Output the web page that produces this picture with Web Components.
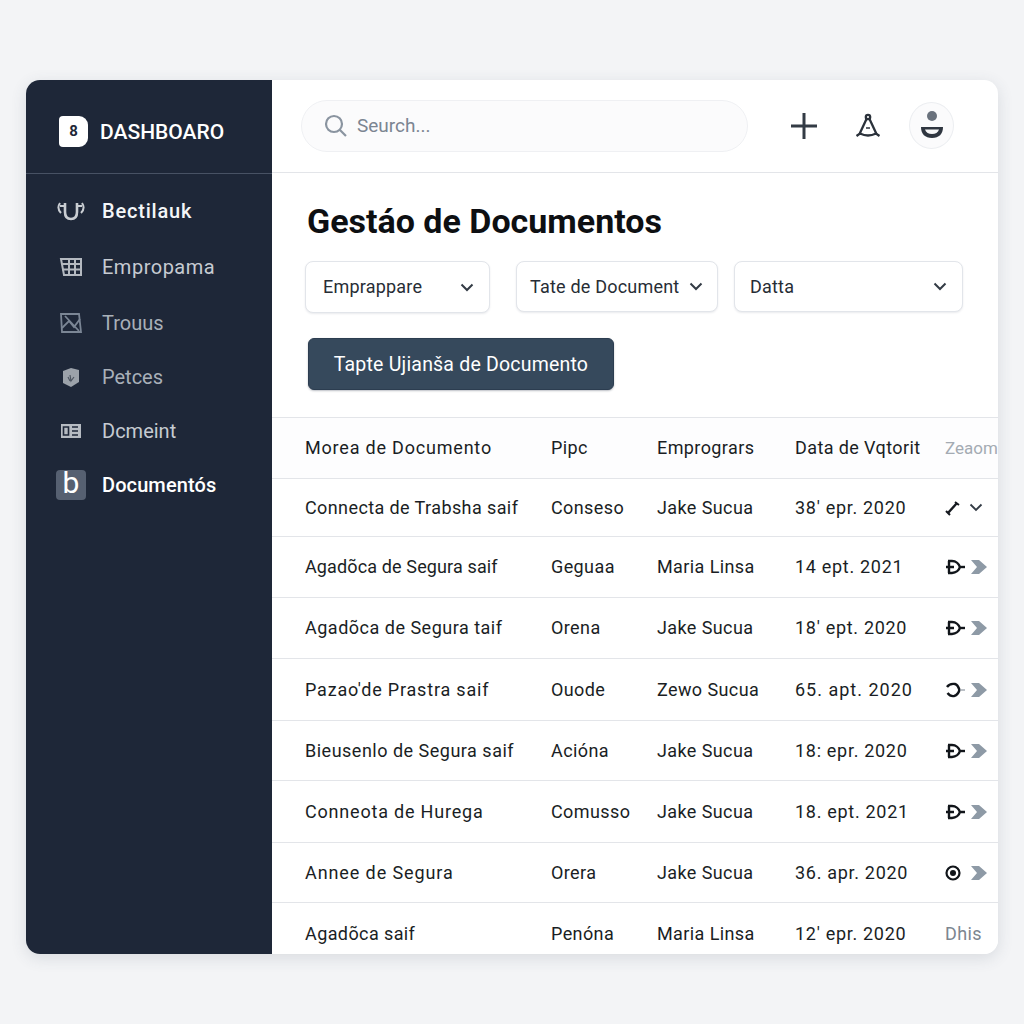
<!DOCTYPE html>
<html lang="pt">
<head>
<meta charset="utf-8">
<title>Gestão de Documentos</title>
<style>
html,body{margin:0;padding:0;background:#f3f4f6}
body{font-family:Roboto,"Liberation Sans",sans-serif;padding:80px 26px 70px;box-sizing:border-box;height:1024px;overflow:hidden}
</style>
</head>
<body>
<app-shell>
  <side-bar slot="side">
    <nav-item h="56" first tone="#f4f6f8" label="Bectilauk" weight="500" ls=".8"><svg viewBox="0 0 28 20" width="28" height="20" fill="none" stroke="#c9cdd2" stroke-width="2.600"><path d="M8 2v9c0 4 2 7 6 7s6-3 6-7V2"/><path d="M3 2c-2 3-2 7 1 10M25 2c2 3 2 7-1 10M3 5h5M20 5h5" stroke-width="2"/></svg></nav-item>
    <nav-item h="56" tone="#c6cbd2" label="Empropama" ls=".5"><svg viewBox="0 0 24 20" width="24" height="20" fill="none" stroke="#b4b9c0" stroke-width="2"><path d="M2 2h20v16H5z"/><path d="M2 7h20M3 12.500h19M10 2v16M16 2v16"/></svg></nav-item>
    <nav-item h="55" tone="#a9b0b9" label="Trouus"><svg viewBox="0 0 24 22" width="24" height="22" fill="none" stroke="#7b8695" stroke-width="1.800"><path d="M2 2h18l2 18H3z"/><path d="M3 16 10 9l5 6 6-8M6 4l14 15"/></svg></nav-item>
    <nav-item h="54" tone="#a9b0b9" label="Petces"><svg viewBox="0 0 20 22" width="20" height="22"><path d="M2 5l8-3 8 2v12l-8 5-8-4z" fill="#9ca2aa"/><path d="M9 9l1 6 3-4M7 11l2 4" fill="none" stroke="#4d5561" stroke-width="1.200"/></svg></nav-item>
    <nav-item h="54" tone="#c6cbd2" label="Dcmeint"><svg viewBox="0 0 22 16" width="22" height="16"><rect x="1" y="1" width="20" height="14" fill="#b6bbc2"/><path d="M3.500 4h5v8h-5zM12 4h6M12 8h6M12 12h6" stroke="#1e2738" stroke-width="1.600" fill="none"/></svg></nav-item>
    <nav-item h="53" active tone="#fff" label="Documentós" weight="500" ls=".1"><span style="font:400 30px/30px Roboto,sans-serif;color:#fff;margin-top:-3px">b</span></nav-item>
  </side-bar>
  <top-bar slot="main"></top-bar>
  <page-head slot="main"></page-head>
  <doc-table slot="main">
    <doc-row head name="Morea de Documento" nls=".8" type="Pipc" owner="Emprogrars" date="Data de Vqtorit" dls=".4" act="text:Zeaom" h="61"></doc-row>
    <doc-row name="Connecta de Trabsha saif" type="Conseso" owner="Jake Sucua" date="38' epr. 2020" act="first" h="58"></doc-row>
    <doc-row name="Agadõca de Segura saif" nls=".13" type="Geguaa" owner="Maria Linsa" date="14  ept.  2021" act="d" h="61"></doc-row>
    <doc-row name="Agadõca de Segura taif" nls=".5" type="Orena" owner="Jake Sucua" date="18'  ept. 2020" act="d" h="61"></doc-row>
    <doc-row name="Pazao'de Prastra saif" nls=".8" type="Ouode" owner="Zewo Sucua" date="65.  apt. 2020" dls="1" act="o" h="62"></doc-row>
    <doc-row name="Bieusenlo de Segura saif" nls=".5" type="Acióna" owner="Jake Sucua" date="18:  epr. 2020" act="d" h="60"></doc-row>
    <doc-row name="Conneota de Hurega" nls=".8" type="Comusso" owner="Jake Sucua" date="18.  ept. 2021" act="d" h="62"></doc-row>
    <doc-row name="Annee de Segura" nls=".9" type="Orera" owner="Jake Sucua" date="36.  apr. 2020" act="c" h="60"></doc-row>
    <doc-row name="Agadõca saif" type="Penóna" owner="Maria Linsa" date="12' epr. 2020" act="text:Dhis" h="61" last></doc-row>
  </doc-table>
</app-shell>
<script>
const def=(n,c)=>customElements.define(n,c);
class Base extends HTMLElement{
  render(html){const r=this.shadowRoot||this.attachShadow({mode:'open'});r.innerHTML=html;return r}
}
def('app-shell',class extends Base{connectedCallback(){this.render(`<style>
:host{display:flex;width:972px;height:874px;border-radius:14px;overflow:hidden;background:#fff;box-shadow:0 4px 16px rgba(60,70,90,.14)}
.s{flex:0 0 246px;display:flex}.m{flex:1;min-width:0;display:flex;flex-direction:column;overflow:hidden}
</style><div class="s"><slot name="side"></slot></div><div class="m"><slot name="main"></slot></div>`)}});
def('side-bar',class extends Base{connectedCallback(){this.render(`<style>
:host{display:block;flex:1;background:#1e2738;color:#fff}
.brand{height:94px;box-sizing:border-box;border-bottom:1px solid #485264;display:flex;align-items:center;padding:10px 0 0 33px;gap:12px}
.logo{width:29px;height:31px;background:#fff;color:#1e2738;border-radius:4px 9px 9px 4px;font:700 15px/31px Roboto,sans-serif;text-align:center}
.t{font:500 21px/24px Roboto,sans-serif;color:#fff;letter-spacing:0}
.n{padding-top:9px;display:flex;flex-direction:column}
</style><div class="brand"><div class="logo">8</div><div class="t">DASHBOARO</div></div><div class="n"><slot></slot></div>`)}});
def('nav-item',class extends Base{connectedCallback(){const a=this.hasAttribute('active');this.render(`<style>
:host{display:flex;align-items:center;height:${this.getAttribute('h')}px;padding-left:30px}
.i{width:30px;height:30px;display:flex;align-items:center;justify-content:center;border-radius:4px;margin-right:16px;background:${a?'#566071':'transparent'}}
.l{font:${this.getAttribute('weight')||400} 20px/24px Roboto,sans-serif;letter-spacing:${this.getAttribute('ls')||0}px;color:${this.getAttribute('tone')}}
</style><div class="i"><slot></slot></div><div class="l">${this.getAttribute('label')}</div>`)}});
def('top-bar',class extends Base{connectedCallback(){this.render(`<style>
:host{display:flex;align-items:center;flex:0 0 93px;box-sizing:border-box;height:93px;border-bottom:1px solid #e3e5e9;padding:0 0 0 29px}
.s{width:447px;height:52px;box-sizing:border-box;border:1px solid #eff0f3;border-radius:26px;background:#fbfbfc;display:flex;align-items:center;padding-left:21px;gap:8px}
.s span{font:400 19px/24px Roboto,sans-serif;color:#7b8592}
.p{margin-left:42px;display:flex}.b{margin-left:37px;display:flex}
.a{margin:-2px 0 0 28px;width:45px;height:47px;border-radius:50%;box-sizing:border-box;border:1px solid #eceef1;background:#fbfbfc;display:flex;align-items:center;justify-content:center}
</style>
<div class="s"><svg width="26" height="26" viewBox="0 0 26 26" fill="none" stroke="#8a94a0" stroke-width="2.200"><circle cx="11" cy="11" r="8"/><path d="M17 17l6 6"/></svg><span>Seurch...</span></div>
<div class="p"><svg width="28" height="28" viewBox="0 0 28 28" stroke="#333b45" stroke-width="3" fill="none"><path d="M14 1v26M1 14h26"/></svg></div>
<div class="b"><svg width="26" height="26" viewBox="0 0 26 26" fill="none" stroke="#2b323b" stroke-width="2.300"><circle cx="13" cy="4" r="2.200"/><path d="M11.500 6 4.500 21M14.500 6l7 15"/><path d="M1.500 23 5 20.500c5 2.500 11 2.500 16 0l3.500 2.500"/><path d="M11 15h4" stroke-width="1.500"/></svg></div>
<div class="a"><svg width="26" height="34" viewBox="0 0 26 34"><circle cx="13" cy="8" r="5" fill="#6a727d"/><path d="M2 19h22c0 7-4 11-11 11S2 26 2 19z" fill="#2f3640"/><path d="M6 21.500h14c-1 3-3.500 4.500-7 4.500s-6-1.500-7-4.500z" fill="#f7f7f8"/></svg></div>`)}});
def('filter-select',class extends Base{connectedCallback(){this.render(`<style>
:host{display:flex;align-items:center;justify-content:space-between;box-sizing:border-box;height:${this.getAttribute('h')||52}px;width:${this.getAttribute('w')}px;margin-right:${this.getAttribute('gap')||0}px;padding:0 ${this.getAttribute('pr')||15}px 0 ${this.getAttribute('pl')||17}px;background:#fff;border:1px solid #e2e5ea;border-radius:8px;box-shadow:0 1px 2px rgba(70,80,110,.12);font:400 18px/22px Roboto,sans-serif;letter-spacing:.2px;color:#272d35;white-space:nowrap}
</style><span><slot></slot></span><svg width="14" height="9" viewBox="0 0 14 9" fill="none" stroke="#333b45" stroke-width="2"><path d="M1.500 1.500 7 7l5.500-5.500"/></svg>`)}});
def('page-head',class extends Base{connectedCallback(){this.render(`<style>
:host{display:block;padding:28px 0 0 33px;flex:0 0 auto;height:244px;box-sizing:border-box}
h1{margin:0 0 0 2px;font:700 34px/40px Roboto,sans-serif;color:#0d0f12}
.f{display:flex;margin-top:20px}
button{display:block;margin:25px 0 0 3px;padding:2px 0 0;width:306px;height:52px;border-radius:6px;border:1px solid #2c3d50;background:#36495c;color:#fff;font:400 19.500px/22px Roboto,sans-serif;letter-spacing:.2px;box-shadow:0 1px 2px rgba(30,40,60,.3)}
</style><h1>Gestáo de Documentos</h1>
<div class="f">
<filter-select w="185" gap="26">Emprappare</filter-select>
<filter-select w="202" gap="16" h="51" pl="13" pr="14">Tate de Document</filter-select>
<filter-select w="229" h="51" pl="15">Datta</filter-select></div>
<button>Tapte Ujianša de Documento</button>`)}});
def('doc-table',class extends Base{connectedCallback(){this.render(`<style>
:host{display:block;flex:1;min-height:0;overflow:hidden;border-top:1px solid #e3e5e9}
</style><slot></slot>`)}});
const D='<svg width="21" height="16" viewBox="0 0 21 16" fill="none" stroke="#11151a" stroke-width="2.400"><path d="M4 2v12M3 2h4c4 0 7 3 8 6-1 3-4 6-8 6H3M1 8h8"/><path d="M16 8h4"/></svg>';
const O='<svg width="21" height="16" viewBox="0 0 21 16" fill="none" stroke="#11151a" stroke-width="2.400"><path d="M2 5c2-3 5-3.500 8-3 2 .5 3.500 3 4.500 6-1 3-3 5.500-5.500 6-3 .5-5-1-6.500-3"/><path d="M15 8h5" stroke="#a4abb3" stroke-width="1.500"/></svg>';
const C='<svg width="21" height="16" viewBox="0 0 21 16"><circle cx="8" cy="8" r="6.500" fill="none" stroke="#11151a" stroke-width="2.200"/><circle cx="8" cy="8" r="3" fill="#11151a"/></svg>';
const G='<svg style="margin-left:5px" width="16" height="14" viewBox="0 0 16 14"><path d="M0 0h8l8 7-8 7H0l6-7z" fill="#8e9aa6"/></svg>';
def('doc-row',class extends Base{connectedCallback(){
 const g=k=>this.getAttribute(k)||'',h=this.hasAttribute('head');const a=g('act');let act='';
 if(a.startsWith('text:'))act=`<span class="x ${h?'h':''}">${a.slice(5)}</span>`;
 else if(a==='first')act=`<svg width="16" height="16" viewBox="0 0 16 16" fill="none" stroke="#15191f" stroke-width="2.400"><path d="M3 13l9-10"/><path d="M1 11l4 4M10 2l4 3" stroke-width="2"/></svg><svg style="margin-left:8px" width="14" height="9" viewBox="0 0 14 9" fill="none" stroke="#333b45" stroke-width="1.800"><path d="M1.500 1.500 7 7l5.500-5.500"/></svg>`;
 else act=(a==='d'?D:a==='o'?O:C)+G;
 this.render(`<style>
:host{display:grid;grid-template-columns:246px 106px 138px 150px 1fr;align-items:center;box-sizing:border-box;height:${g('h')}px;padding:0 0 ${h?'1px':'0'} 33px;border-bottom:${this.hasAttribute('last')?'0':'1px solid #e3e5e9'};font:400 18px/22px Roboto,sans-serif;letter-spacing:.4px;color:#1a1e24;white-space:nowrap;background:${h?'#fdfdfe':'#fff'}}
.a{display:flex;align-items:center;overflow:hidden}
.n{letter-spacing:${g('nls')||.4}px}
.d{letter-spacing:${g('dls')||.7}px}
.x{color:#7d8690;font-size:18px}.x.h{color:#a4abb3;font-size:17px;letter-spacing:0}
</style><div class="n">${g('name')}</div><div>${g('type')}</div><div>${g('owner')}</div><div class="d">${g('date')}</div><div class="a">${act}</div>`)}});
</script>
</body>
</html>
